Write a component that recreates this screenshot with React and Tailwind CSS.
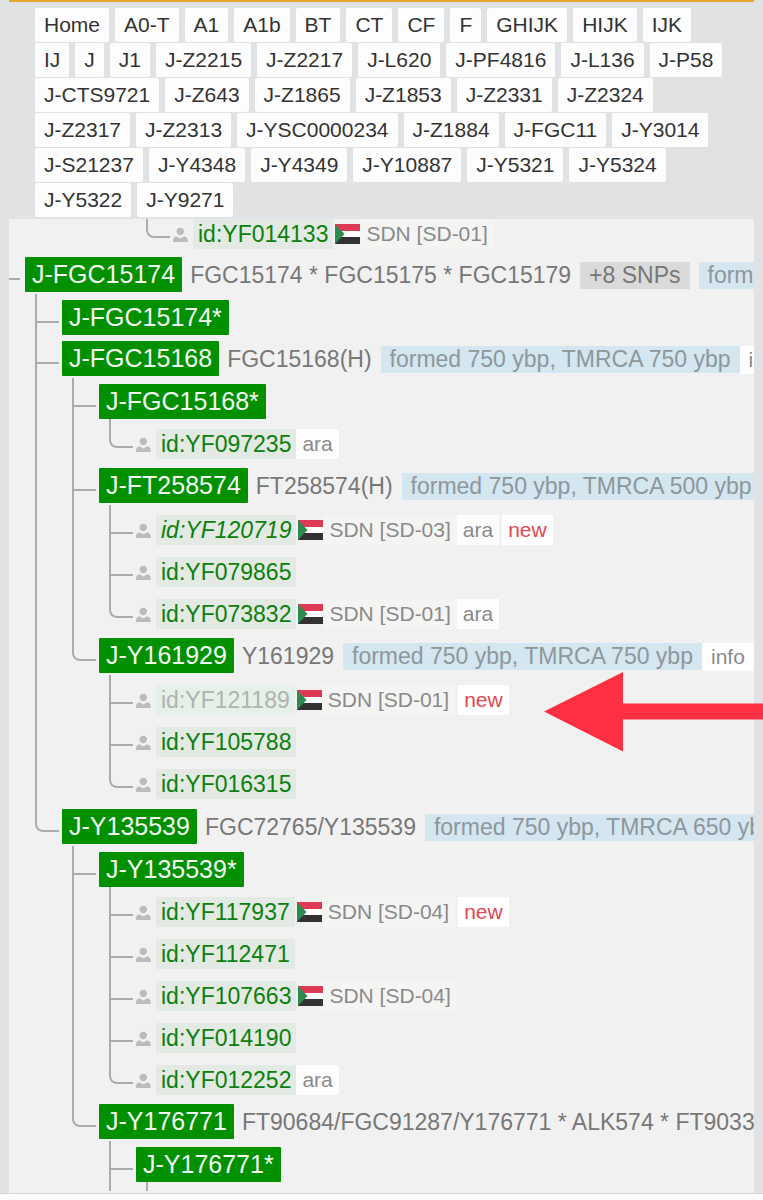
const CRUMBS = [
  "Home", "A0-T", "A1", "A1b", "BT", "CT", "CF", "F", "GHIJK", "HIJK", "IJK",
  "IJ", "J", "J1", "J-Z2215", "J-Z2217", "J-L620", "J-PF4816", "J-L136", "J-P58",
  "J-CTS9721", "J-Z643", "J-Z1865", "J-Z1853", "J-Z2331", "J-Z2324",
  "J-Z2317", "J-Z2313", "J-YSC0000234", "J-Z1884", "J-FGC11", "J-Y3014",
  "J-S21237", "J-Y4348", "J-Y4349", "J-Y10887", "J-Y5321", "J-Y5324",
  "J-Y5322", "J-Y9271",
];

const TREE = {
  name: "J-FGC15174",
  snps: "FGC15174 * FGC15175 * FGC15179",
  more: "+8 SNPs",
  age: "formed 750 ybp, TMRCA 750 ybp",
  children: [
    { name: "J-FGC15174*" },
    {
      name: "J-FGC15168",
      snps: "FGC15168(H)",
      age: "formed 750 ybp, TMRCA 750 ybp",
      info: true,
      children: [
        { name: "J-FGC15168*", children: [{ id: "YF097235", lang: "ara" }] },
        {
          name: "J-FT258574",
          snps: "FT258574(H)",
          age: "formed 750 ybp, TMRCA 500 ybp",
          children: [
            { id: "YF120719", region: "SD-03", lang: "ara", isNew: true, italic: true },
            { id: "YF079865" },
            { id: "YF073832", region: "SD-01", lang: "ara" },
          ],
        },
        {
          name: "J-Y161929",
          snps: "Y161929",
          age: "formed 750 ybp, TMRCA 750 ybp",
          info: true,
          children: [
            { id: "YF121189", region: "SD-01", isNew: true, pending: true },
            { id: "YF105788" },
            { id: "YF016315" },
          ],
        },
      ],
    },
    {
      name: "J-Y135539",
      snps: "FGC72765/Y135539",
      age: "formed 750 ybp, TMRCA 650 ybp",
      children: [
        {
          name: "J-Y135539*",
          children: [
            { id: "YF117937", region: "SD-04", isNew: true },
            { id: "YF112471" },
            { id: "YF107663", region: "SD-04" },
            { id: "YF014190" },
            { id: "YF012252", lang: "ara" },
          ],
        },
        {
          name: "J-Y176771",
          snps: "FT90684/FGC91287/Y176771 * ALK574 * FT9033",
          open: true,
          children: [{ name: "J-Y176771*", open: true }],
        },
      ],
    },
  ],
};

const PersonIcon = () => (
  <svg width="15" height="18" viewBox="0 0 15 18" className="shrink-0 fill-[#bcbcbc]" aria-hidden="true">
    <path d="M7.300 2.800c2.100 0 3.800 1.600 3.800 3.600 0 1.800-1.800 3.900-3.800 3.900S3.500 8.200 3.500 6.400c0-2 1.700-3.600 3.800-3.600z" />
    <path d="M0 17v-1.700c0-2 1.200-3.400 3.300-4.100l4 2.300 4-2.300c2.200.7 3.500 2.100 3.500 4.100V17z" />
  </svg>
);

const SudanFlag = () => (
  <svg width="25" height="20" viewBox="0 0 25 20" className="ml-0.5 shrink-0" role="img" aria-label="Sudan">
    <rect width="25" height="7" fill="#dd3a55" />
    <rect y="7" width="25" height="6" fill="#fdfdfd" />
    <rect y="13" width="25" height="7" fill="#333132" />
    <path d="M0 0l9.500 10L0 20z" fill="#2f8a50" />
  </svg>
);

const Sample = ({ sample }) => (
  <div className="flex h-[42px] items-start pt-1 text-[21px] leading-[30px] text-[#8a8a8a]">
    <span className="flex items-center">
      <PersonIcon />
      <a
        href={`#${sample.id}`}
        className={`ml-[5px] px-[5px] text-[23px] ${sample.italic ? "italic" : ""} ${
          sample.pending ? "bg-[#e5f0e8] text-[#b0b3b0]" : "bg-[#e3e9e3] text-[#0b800b]"
        }`}
      >
        id:{sample.id}
      </a>
      {sample.region && (
        <>
          <SudanFlag />
          <span className="bg-[#f4f4f3] px-1.5">SDN [{sample.region}]</span>
        </>
      )}
      {sample.lang && <span className="bg-[#fdfdfd] px-1.5">{sample.lang}</span>}
      {sample.isNew && <span className="ml-[3px] bg-white px-1.5 text-[#e04850]">new</span>}
    </span>
  </div>
);

const Branch = ({ node }) => {
  const star = node.name.endsWith("*");
  return (
    <>
      <div className={`flex items-baseline text-[23px] leading-[27px] text-[#777777] ${star ? "h-[35px]" : "h-[37px]"}`}>
        <a href={`#${node.name}`} className="rounded-[1px] bg-[#009000] px-[7px] text-[25px] leading-[35px] text-[#f4fbf4]">
          {node.name}
        </a>
        {node.snps && <span className="ml-2">{node.snps}</span>}
        {node.more && (
          <button type="button" className="ml-[9px] bg-[#dadada] px-[9px]">{node.more}</button>
        )}
        {node.age && <span className="ml-[9px] bg-[#d4e6f0] px-[9px] text-[#8d979c]">{node.age}</span>}
        {node.info && (
          <a href="#info" className="bg-white px-[9px] text-[21px] leading-[28px] text-[#8a8a8a]">info</a>
        )}
      </div>
      {/* stub joining the label to its first child */}
      <div className={`ml-[10px] h-1.5 ${node.children || node.open ? "border-l-2 border-[#ababab]" : ""}`} />
      {node.children && (
        <ul className={`ml-[10px] ${node.open ? "" : "pb-px"}`}>
          {node.children.map((child, i) => (
            <TreeItem
              key={child.id || child.name}
              node={child}
              last={i === node.children.length - 1 && !node.open}
            />
          ))}
        </ul>
      )}
      {node.open && !node.children && <div className="ml-[10px] h-[3px] border-l-2 border-[#ababab]" />}
    </>
  );
};

const TreeItem = ({ node, last }) => (
  <li className="flex">
    <div className="flex w-[27px] shrink-0 flex-col">
      <div className={`h-[23px] w-6 border-b-2 border-l-2 border-[#ababab] ${last ? "rounded-bl-lg" : ""}`} />
      {!last && <div className="flex-1 border-l-2 border-[#ababab]" />}
    </div>
    <div>{node.id ? <Sample sample={node} /> : <Branch node={node} />}</div>
  </li>
);

const Arrow = () => (
  <svg width="219" height="80" viewBox="0 0 219 80" className="absolute right-0 top-[672px]" aria-hidden="true">
    <path d="M0 39.500L79 0v31.500h140v16H79V79.500z" fill="#ff3042" />
  </svg>
);

const App = () => {
  return (
    <div
      className="relative flex min-h-screen flex-col overflow-hidden bg-[#e0e2e4]"
      style={{ fontFamily: '"Liberation Sans", Arial, sans-serif' }}
    >
      <nav className="mx-[9px] border-t-2 border-[#e2a92f] pb-0.5 pl-[26px] pr-[29px] pt-1.5">
        <ul className="flex flex-wrap gap-x-1.5 gap-y-px">
          {CRUMBS.map((name) => (
            <li key={name}>
              <a href={`#${name}`} className="block rounded-xs bg-[#fdfdfd] px-[9px] text-[21px] leading-[34px] text-[#333333]">
                {name}
              </a>
            </li>
          ))}
        </ul>
      </nav>

      <main className="mx-[9px] flex-1 overflow-hidden whitespace-nowrap bg-[#f1f1f1]">
        <ul className="-mt-1">
          <li className="pl-[137px]">
            <ul>
              <TreeItem node={{ id: "YF014133", region: "SD-01" }} last />
            </ul>
          </li>
          <li className="flex">
            <div className="w-4 shrink-0">
              <div className="h-[23px] w-[11px] border-b-2 border-[#ababab]" />
            </div>
            <div>
              <Branch node={TREE} />
            </div>
          </li>
        </ul>
      </main>
      <div className="h-[7px] shrink-0 border-t border-[#d5d5d5] bg-[#fcfcfc]" />

      <Arrow />
    </div>
  );
};

export default App;
